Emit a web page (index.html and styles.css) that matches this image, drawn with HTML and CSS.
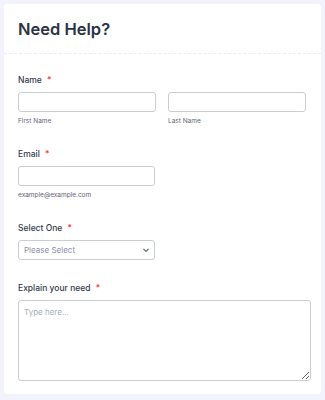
FILE: index.html
```html
<!DOCTYPE html>
<html lang="en">
<head>
    <meta charset="UTF-8">
    <title>Need Help?</title>
    <link rel="stylesheet" href="styles.css">
</head>
<body>
<div class="card">
    <div class="header">
        <h1>Need Help?</h1>
    </div>
    <div class="form">
        <div class="field">
            <label class="label">Name <span class="req">*</span></label>
            <div class="row">
                <div class="col">
                    <input class="input" type="text">
                    <span class="sub">First Name</span>
                </div>
                <div class="col">
                    <input class="input" type="text">
                    <span class="sub">Last Name</span>
                </div>
            </div>
        </div>
        <div class="field">
            <label class="label">Email <span class="req">*</span></label>
            <input class="input half" type="text">
            <span class="sub">example@example.com</span>
        </div>
        <div class="field">
            <label class="label">Select One <span class="req">*</span></label>
            <div class="select half">
                <span>Please Select</span>
                <svg width="8" height="6" viewBox="0 0 8 6"><path d="M1.5 1.8l2.5 2.5 2.5-2.5" fill="none" stroke="#57647e" stroke-width="1.2"/></svg>
            </div>
        </div>
        <div class="field">
            <label class="label">Explain your need <span class="req">*</span></label>
            <textarea class="area" placeholder="Type here..."></textarea>
        </div>
    </div>
</div>
</body>
</html>
```

FILE: styles.css
```css
*{
    margin: 0;
    padding: 0;
    box-sizing: border-box;
}
body{
    background: #f3f3fe;
    padding: 4px;
    font-family: Inter, "Liberation Sans", sans-serif;
    color: #2c3345;
}
.card{
    width: 317px;
    background: #fff;
    border-radius: 3px;
    padding-bottom: 13px;
}
.header{
    height: 50px;
    padding: 14px 14px 0;
    border-bottom: 1px dashed #eceef3;
}
.header h1{
    font-size: 16.5px;
    line-height: 22px;
    font-weight: 600;
}
.form{
    padding: 0 10px 0 14px;
}
.field{
    padding-top: 20px;
}
.field + .field{
    padding-top: 22px;
}
.label{
    display: block;
    font-size: 8.5px;
    line-height: 12px;
    font-weight: 500;
    margin-bottom: 6px;
    color: #343a4d;
}
.req{
    color: #f23a3c;
    margin-left: 3px;
}
.row{
    display: flex;
    gap: 12px;
    width: 288px;
}
.col{
    flex: 1;
}
.input{
    display: block;
    width: 100%;
    height: 20px;
    border: 1px solid #cbcdd5;
    border-radius: 3px;
    background: #fff;
}
.half{
    width: 137px;
}
.sub{
    display: block;
    font-size: 6.5px;
    line-height: 9px;
    color: #5f6577;
    margin-top: 5px;
}
.select{
    display: flex;
    align-items: center;
    justify-content: space-between;
    height: 20px;
    border: 1px solid #cbcdd5;
    border-radius: 3px;
    padding: 0 4px 0 5px;
    font-size: 8px;
    color: #8d8fa8;
}
.area{
    display: block;
    width: 293px;
    height: 81px;
    border: 1px solid #cbcdd5;
    border-radius: 3px;
    padding: 6px 5px;
    font-family: Inter, "Liberation Sans", sans-serif;
    font-size: 8px;
    resize: vertical;
}
.area::placeholder{
    color: #a9adbf;
}
```
